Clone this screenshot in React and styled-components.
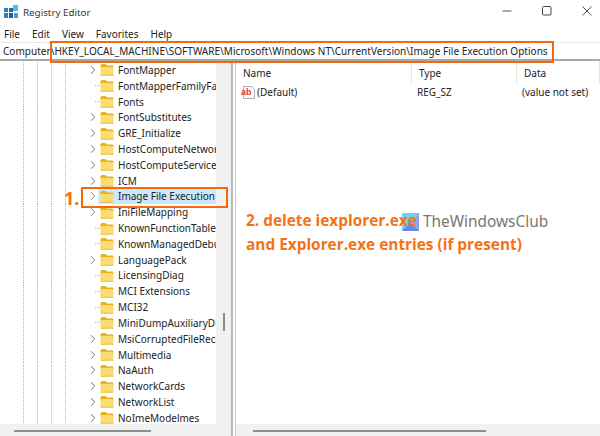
import React from "react";
import styled, { createGlobalStyle } from "styled-components";
import { FiChevronRight } from "react-icons/fi";

const GlobalStyle = createGlobalStyle`
  html, body { margin: 0; padding: 0; background: #fff; }
  body { font-family: "Noto Sans", "Open Sans", sans-serif; color: #1b1b1b; }
`;

const keys = [
  ["FontMapper", true],
  ["FontMapperFamilyFallback", false],
  ["Fonts", false],
  ["FontSubstitutes", true],
  ["GRE_Initialize", true],
  ["HostComputeNetwork", true],
  ["HostComputeService", true],
  ["ICM", true],
  ["Image File Execution", true, true],
  ["IniFileMapping", true],
  ["KnownFunctionTableDlls", false],
  ["KnownManagedDebuggingDlls", false],
  ["LanguagePack", true],
  ["LicensingDiag", false],
  ["MCI Extensions", false],
  ["MCI32", false],
  ["MiniDumpAuxiliaryDlls", false],
  ["MsiCorruptedFileRecovery", true],
  ["Multimedia", true],
  ["NaAuth", true],
  ["NetworkCards", true],
  ["NetworkList", true],
  ["NoImeModelmes", true],
];

const Page = styled.div`
  position: relative;
  width: 600px;
  height: 436px;
  overflow: hidden;
  background: #fff;
`;

const TitleBar = styled.div`
  height: 26px;
  display: flex;
  align-items: center;
  padding: 0 0 2px 4px;
  box-sizing: border-box;
`;

const AppIcon = styled.svg`
  width: 14px;
  height: 14px;
  margin-right: 5px;
`;

const Title = styled.span`
  font-size: 9.8px;
  color: #333;
  flex: 1;
`;

const WindowButtons = styled.div`
  display: flex;
  gap: 14px;
  align-self: flex-start;
`;

const WindowButton = styled.div`
  width: 26px;
  height: 22px;
  display: flex;
  align-items: center;
  justify-content: center;
`;

const MenuBar = styled.div`
  height: 15px;
  display: flex;
  gap: 12px;
  padding: 0 0 0 4px;
  align-items: center;
  font-size: 10px;
  color: #222;
`;

const AddressBar = styled.div`
  height: 19px;
  margin-top: 1px;
  border-top: 1px solid #e8e8e8;
  border-bottom: 2px solid #a8a8a8;
  box-sizing: border-box;
  display: flex;
  align-items: center;
  padding-left: 3px;
  font-size: 10px;
  letter-spacing: 0.03px;
  white-space: nowrap;
  color: #222;
`;

const Panes = styled.div`
  display: flex;
  height: 375px;
`;

const TreePane = styled.div`
  width: 231px;
  display: flex;
  flex-direction: column;
  flex: none;
`;

const TreeBody = styled.div`
  height: 363px;
  display: flex;
`;

const Tree = styled.div`
  width: 216px;
  padding-top: 1px;
  overflow: hidden;
  background: #fff;
`;

const VScroll = styled.div`
  flex: 1;
  background: #f1f1f1;
  display: flex;
  justify-content: center;
  padding-top: 252px;
`;

const VThumb = styled.div`
  width: 2px;
  height: 18px;
  background: #8a8a8a;
`;

const Row = styled.div`
  height: 15.82px;
  display: flex;
  align-items: center;
  font-size: 10px;
  white-space: nowrap;
  color: #222;
  background-image: repeating-linear-gradient(to bottom, #b5b5b5 0 1px, transparent 1px 2px),
    repeating-linear-gradient(to bottom, #b5b5b5 0 1px, transparent 1px 2px),
    repeating-linear-gradient(to bottom, #b5b5b5 0 1px, transparent 1px 2px),
    repeating-linear-gradient(to bottom, #b5b5b5 0 1px, transparent 1px 2px);
  background-size: 1px 100%;
  background-repeat: no-repeat;
  background-position: 23px 0, 37px 0, 51px 0, 65px 0;
`;

const Expander = styled.div`
  width: 14px;
  margin-left: 86px;
  flex: none;
  display: flex;
  align-items: center;
  color: #707070;
  height: 100%;
`;

const Stub = styled.div`
  width: 5px;
  margin-left: 95px;
  flex: none;
  height: 1px;
  background-image: repeating-linear-gradient(to right, #b5b5b5 0 1px, transparent 1px 2px);
`;

const Label = styled.span`
  display: flex;
  align-items: center;
  height: 100%;
  min-width: 0;
  flex: 1;
  margin-left: -2px;
  padding-left: 2px;
  background: ${(p) => (p.$selected ? "#cce8ff" : "transparent")};
  overflow: hidden;
`;

const FolderIcon = styled.svg`
  width: 14px;
  height: 13px;
  flex: none;
  margin-right: 4px;
`;

const HScroll = styled.div`
  height: 12px;
  background: #f1f1f1;
  display: flex;
  align-items: center;
  box-sizing: border-box;
  padding: 2px 0 0 ${(p) => p.$left}px;
`;

const HThumb = styled.div`
  height: 2px;
  width: ${(p) => p.$width}px;
  background: #8f8f8f;
`;

const Splitter = styled.div`
  width: 5px;
  flex: none;
  background: #fff;
  border-left: 2px solid #b9b9b9;
  border-right: 1px solid #c8c8c8;
  box-sizing: border-box;
`;

const ValuesPane = styled.div`
  flex: 1;
  display: flex;
  flex-direction: column;
`;

const Values = styled.div`
  height: 363px;
  font-size: 10px;
  color: #222;
`;

const HeaderRow = styled.div`
  display: grid;
  grid-template-columns: 176px 105px 1fr;
  height: 23px;
`;

const HeaderCell = styled.div`
  display: flex;
  align-items: center;
  padding-left: 7px;
  padding-top: 1px;
  border-right: 1px solid #e5e5e5;
`;

const ValueRow = styled.div`
  display: grid;
  grid-template-columns: 176px 105px 1fr;
  height: 16px;
  align-items: center;
`;

const ValueCell = styled.div`
  display: flex;
  align-items: center;
  padding-left: ${(p) => p.$pad}px;
`;

const ValueIcon = styled.svg`
  width: 14px;
  height: 13px;
  margin-right: 2px;
`;

const Highlight = styled.div`
  position: absolute;
  box-sizing: border-box;
  border: 2px solid #f26a0f;
  left: ${(p) => p.$x}px;
  top: ${(p) => p.$y}px;
  width: ${(p) => p.$w}px;
  height: ${(p) => p.$h}px;
`;

const Note = styled.div`
  position: absolute;
  font-family: "Open Sans", "Noto Sans", sans-serif;
  font-weight: 700;
  color: #f47216;
  left: ${(p) => p.$x}px;
  top: ${(p) => p.$y}px;
  font-size: ${(p) => p.$size}px;
  line-height: 23px;
  white-space: nowrap;
`;

const Watermark = styled.div`
  position: absolute;
  left: 402px;
  top: 213px;
  display: flex;
  align-items: center;
  font-size: 15.4px;
  line-height: 18px;
  color: #777;
  white-space: nowrap;
`;

const WatermarkIcon = styled.svg`
  width: 17px;
  height: 18px;
  flex: none;
  margin-right: 4px;
`;

const Folder = () => (
  <FolderIcon viewBox="0 0 14 13">
    <path d="M0.5 2.5 Q0.5 1 2 1 H5.5 L7 2.5 H12.5 Q13.5 2.5 13.5 4 V5 H0.5 Z" fill="#f0ae18" />
    <rect x="0.5" y="4" width="13" height="8.5" rx="1" fill="#fcdb72" />
    <rect x="0.5" y="11.7" width="13" height="1" fill="#efbd45" />
  </FolderIcon>
);

function TreeRow({ name, expandable, selected }) {
  return (
    <Row>
      {expandable ? (
        <Expander>
          <FiChevronRight size={14} strokeWidth={1.6} />
        </Expander>
      ) : (
        <Stub />
      )}
      <Label $selected={selected}>
        <Folder />
        {name}
      </Label>
    </Row>
  );
}

export default function App() {
  return (
    <Page>
      <GlobalStyle />
      <TitleBar>
        <AppIcon viewBox="0 0 14 14">
          <rect x="0" y="3" width="4" height="4" fill="#2d7fb8" />
          <rect x="5" y="3" width="4" height="4" fill="#1f6aa5" />
          <rect x="0" y="8" width="4" height="5" fill="#2d7fb8" />
          <rect x="5" y="8" width="4" height="5" fill="#1d5f96" />
          <rect x="10" y="8" width="4" height="5" fill="#38a1d8" />
          <rect x="9" y="0" width="5" height="6" fill="#4cc0ea" />
        </AppIcon>
        <Title>Registry Editor</Title>
        <WindowButtons>
          <WindowButton>
            <svg width="10" height="10" viewBox="0 0 10 10">
              <path d="M0.5 5 H9.5" stroke="#555" strokeWidth="1" />
            </svg>
          </WindowButton>
          <WindowButton>
            <svg width="10" height="10" viewBox="0 0 10 10">
              <rect x="0.5" y="0.5" width="8.5" height="8.5" rx="1" fill="none" stroke="#444" strokeWidth="1" />
            </svg>
          </WindowButton>
          <WindowButton>
            <svg width="10" height="10" viewBox="0 0 10 10">
              <path d="M0.5 0.5 L9.5 9.5 M9.5 0.5 L0.5 9.5" stroke="#555" strokeWidth="1" />
            </svg>
          </WindowButton>
        </WindowButtons>
      </TitleBar>
      <MenuBar>
        <span>File</span>
        <span>Edit</span>
        <span>View</span>
        <span>Favorites</span>
        <span>Help</span>
      </MenuBar>
      <AddressBar>
        Computer\HKEY_LOCAL_MACHINE\SOFTWARE\Microsoft\Windows NT\CurrentVersion\Image File Execution Options
      </AddressBar>
      <Panes>
        <TreePane>
          <TreeBody>
            <Tree>
              {keys.map(([name, expandable, selected]) => (
                <TreeRow key={name} name={name} expandable={expandable} selected={selected} />
              ))}
            </Tree>
            <VScroll>
              <VThumb />
            </VScroll>
          </TreeBody>
          <HScroll $left={14}>
            <HThumb $width={137} />
          </HScroll>
        </TreePane>
        <Splitter />
        <ValuesPane>
          <Values>
            <HeaderRow>
              <HeaderCell>Name</HeaderCell>
              <HeaderCell>Type</HeaderCell>
              <HeaderCell>Data</HeaderCell>
            </HeaderRow>
            <ValueRow>
              <ValueCell $pad={5}>
                <ValueIcon viewBox="0 0 14 13">
                  <path d="M2.5 0.5 H10.5 L13.5 3.5 V12.5 H2.5 Z" fill="#fff" stroke="#9a9a9a" strokeWidth="0.8" />
                  <text x="0" y="9" fontFamily="Liberation Sans, sans-serif" fontSize="9" fontWeight="700" fill="#d9402f">ab</text>
                </ValueIcon>
                (Default)
              </ValueCell>
              <ValueCell $pad={5}>REG_SZ</ValueCell>
              <ValueCell $pad={5}>(value not set)</ValueCell>
            </ValueRow>
          </Values>
          <HScroll $left={17}>
            <HThumb $width={233} />
          </HScroll>
        </ValuesPane>
      </Panes>
      <Highlight $x={50} $y={41} $w={504} $h={22} />
      <Highlight $x={81} $y={187} $w={147} $h={21} />
      <Watermark>
        <WatermarkIcon viewBox="0 0 17 18">
          <rect width="17" height="18" fill="#6fd0f0" />
          <path d="M0 18 L8.5 9 L17 18 Z" fill="#6a88e0" />
          <path d="M17 0 L8.5 9 L17 18 Z" fill="#86a8e8" />
        </WatermarkIcon>
        TheWindowsClub
      </Watermark>
      <Note $x={64} $y={187} $size={18}>1.</Note>
      <Note $x={246} $y={209} $size={15.4}>2. delete iexplorer.exe</Note>
      <Note $x={246} $y={233} $size={15.4}>and Explorer.exe entries (if present)</Note>
    </Page>
  );
}
